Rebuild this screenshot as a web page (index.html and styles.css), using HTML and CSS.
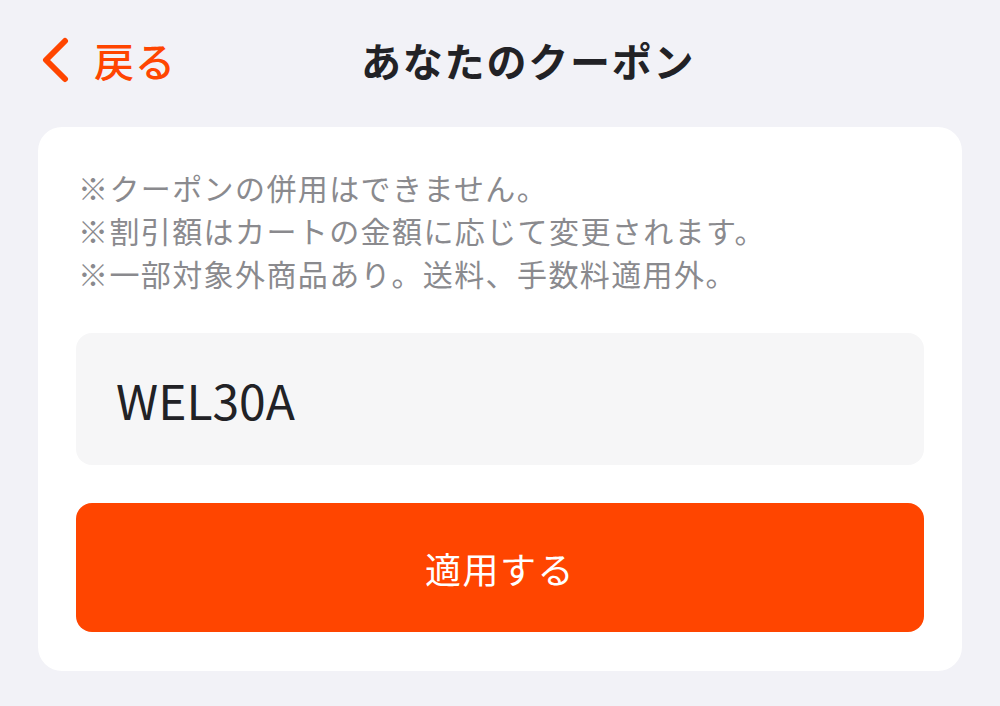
FILE: index.html
```html
<!DOCTYPE html>
<html lang="ja">
<head>
<meta charset="utf-8">
<link rel="stylesheet" href="styles.css">
</head>
<body>
<div class="page">
  <header class="header">
    <a class="back" href="#">
      <svg class="chev" width="30" height="46" viewBox="0 0 30 46"><polyline points="25,4 6,23 25,42" fill="none" stroke="#ff4500" stroke-width="6" stroke-linecap="round" stroke-linejoin="round"/></svg>
      <span class="back-text">戻る</span>
    </a>
    <h1 class="title">あなたのクーポン</h1>
  </header>
  <section class="card">
    <div class="notes">
      <p>※クーポンの併用はできません。</p>
      <p>※割引額はカートの金額に応じて変更されます。</p>
      <p>※一部対象外商品あり。送料、手数料適用外。</p>
    </div>
    <div class="code">WEL30A</div>
    <button class="apply">適用する</button>
  </section>
</div>
</body>
</html>
```

FILE: styles.css
```css
html, body {
  margin: 0;
  padding: 0;
  background: #f2f2f7;
  font-family: "Noto Sans CJK JP", "Noto Sans", sans-serif;
}
.page {
  width: 1000px;
  height: 706px;
  padding: 0 38px;
  box-sizing: border-box;
}
.header {
  height: 127px;
  display: flex;
  align-items: flex-start;
  padding-top: 36px;
  box-sizing: border-box;
}
.back {
  display: flex;
  align-items: center;
  gap: 24px;
  text-decoration: none;
  color: #ff4500;
  padding-left: 2px;
}
.chev {
  display: block;
}
.back-text {
  font-size: 40px;
  font-weight: 500;
  line-height: 48px;
  letter-spacing: 1px;
}
.title {
  margin: 0 0 0 185px;
  font-size: 40px;
  font-weight: 600;
  line-height: 48px;
  color: #222226;
  letter-spacing: 1.8px;
}
.card {
  background: #ffffff;
  border-radius: 24px;
  padding: 39px 38px 39px;
  display: flex;
  flex-direction: column;
  gap: 38px;
}
.notes p {
  margin: 0;
  font-size: 30px;
  line-height: 43px;
  color: #8a8a8e;
  padding-left: 2px;
  letter-spacing: 1.4px;
}
.code {
  height: 132px;
  background: #f6f6f7;
  border-radius: 16px;
  display: flex;
  align-items: center;
  padding-left: 40px;
  font-size: 48px;
  color: #222226;
}
.apply {
  height: 129px;
  border: none;
  border-radius: 16px;
  background: #ff4500;
  color: #ffffff;
  font-family: "Noto Sans CJK JP", "Noto Sans", sans-serif;
  font-size: 36px;
  font-weight: 400;
  letter-spacing: 1.5px;
  padding: 0;
}
```
